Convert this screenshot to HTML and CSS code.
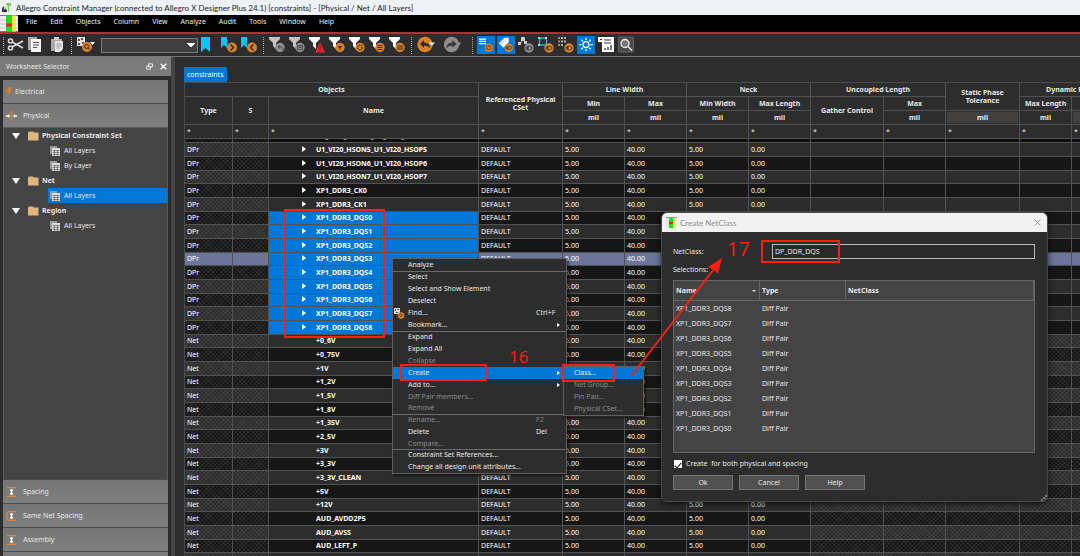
FILE: index.html
```
<!DOCTYPE html>
<html lang="en">
<head>
<meta charset="utf-8">
<title>Allegro Constraint Manager</title>
<link rel="stylesheet" href="styles.css">
</head>
<body>
<svg class="defs" width="0" height="0" aria-hidden="true">
  <symbol id="funnel" viewBox="0 0 20 20"><path d="M2 2h11v2L9 8v6l-3-3V8L2 4z" fill="#fff"/></symbol>
  <symbol id="funnel-dim" viewBox="0 0 20 20"><path d="M2 2h11v2L9 8v6l-3-3V8L2 4z" fill="#c4c4c4"/></symbol>
  <symbol id="sheet" viewBox="0 0 12 12"><path d="M1 1h7v2H3v6H1z" fill="#999"/><rect x="3" y="3" width="8" height="8" fill="#ddd"/><path d="M3.5 5.5h7M3.500 7.500h7M3.500 9.500h7M5.500 5v6M8.500 5v6" stroke="#555" stroke-width=".6"/></symbol>
  <symbol id="folder" viewBox="0 0 11 10"><path d="M0 1.500 1 .5h4l1 1h4.500v8H0z" fill="#dfb67c"/></symbol>
  <symbol id="app" viewBox="0 0 18 16"><rect width="18" height="16" fill="#eee"/><path d="M0 4.500h6M0 8.500h6M0 12.500h6" stroke="#bbb" stroke-width=".7"/><rect x="6" width="6" height="16" fill="#1be01b"/><rect x="12" width="4" height="16" fill="#f6f032"/><rect x="6" y="8" width="6" height="3" fill="#e3241c"/><path d="M12 4.500h6M12 8.500h6M12 12.500h6" stroke="#c9c060" stroke-width=".6"/></symbol>
  <symbol id="toggle" viewBox="0 0 10 10"><circle cx="5" cy="5" r="4.700" fill="currentColor"/><rect x="2" y="3.400" width="6" height="3.400" rx="1.600" fill="none" stroke="#2d2d2d" stroke-width=".8"/><circle cx="3.600" cy="5.100" r="1" fill="#2d2d2d"/></symbol>
</svg>

<header class="titlebar">
  <svg width="11" height="11" viewBox="0 0 11 11"><path d="M1 6l2-2v6H1z" fill="#2b2f9a"/><path d="M3 8l3-4v6H3z" fill="#222"/><path d="M4 5l3-1-2 5z" fill="#f4e22a"/><path d="M7 1h3v3H8v6H7z" fill="#5ed65e"/><path d="M5 3l2-2v2z" fill="#e33"/></svg>
  <span>Allegro Constraint Manager (connected to Allegro X Designer Plus 24.1) [constraints] - [Physical / Net / All Layers]</span>
</header>
<nav class="menubar">
  <svg class="menubar-logo" width="18" height="17"><use href="#app"/></svg>
  <button>File</button><button>Edit</button><button>Objects</button><button>Column</button><button>View</button><button>Analyze</button><button>Audit</button><button>Tools</button><button>Window</button><button>Help</button>
</nav>

<div class="toolbar">
  <i class="grip grip-first"></i>
  <button class="tool" aria-label="Cut"><svg viewBox="0 0 20 20"><g fill="none" stroke="#ddd" stroke-width="1.600"><circle cx="4.500" cy="6" r="2"/><circle cx="4.500" cy="13" r="2"/><path d="M6 7l11 6M6 12l11-6"/></g></svg></button>
  <button class="tool" aria-label="Copy"><svg viewBox="0 0 20 20"><path d="M2 2h9v2H5v11H2z" fill="#aaa"/><path d="M5 4h10v13H5z" fill="#f4f4f4"/><path d="M7 7.500h6M7 10h6M7 12.500h4" stroke="#555"/></svg></button>
  <button class="tool" aria-label="Paste"><svg viewBox="0 0 20 20"><path d="M5 4h11v12H5z" fill="#aaa"/><path d="M8 2h5v3H8z" fill="#ccc"/><path d="M9 6h8v8l-3 3H9z" fill="#e4e4e4"/><path d="M10.500 9h5M10.500 11h5M10.500 13h3" stroke="#888" stroke-width=".8"/></svg></button>
  <i class="grip grip-wide"></i>
  <button class="tool tool-drop" aria-label="Find"><svg viewBox="0 0 25 20"><path d="M1 2h8v9H1z" fill="#e2e2e2"/><path d="M2 4h2v2H2zM5 3h2v2H5zM2 8h2v2H2zM6 7h2v2H6z" fill="#555"/><circle cx="11" cy="12" r="5" fill="#d9822b"/><circle cx="10.500" cy="11.500" r="2" fill="none" stroke="#3a2a18"/><path d="M12 13l2 2" stroke="#3a2a18"/><path d="M14 7h5l-2.500 3z" fill="#fff"/></svg></button>
  <select class="find-box" aria-label="Bookmark"><option></option></select>
  <button class="tool" aria-label="Toggle bookmark"><svg viewBox="0 0 20 20"><path d="M2 2h9v15l-4.500-4L2 17z" fill="#12c2f5"/></svg></button>
  <button class="tool" aria-label="Next bookmark"><svg viewBox="0 0 20 20"><path d="M2 2h6v11L5 10l-3 3z" fill="#12c2f5"/><circle cx="13" cy="12.500" r="5" fill="#d9822b"/><path d="M11.500 9.500l3 3-3 3" fill="none" stroke="#3a2a18" stroke-width="1.500"/></svg></button>
  <button class="tool" aria-label="Previous bookmark"><svg viewBox="0 0 20 20"><path d="M2 2h6v11L5 10l-3 3z" fill="#12c2f5"/><circle cx="13" cy="12.500" r="5" fill="#d9822b"/><path d="M14.500 9.500l-3 3 3 3" fill="none" stroke="#3a2a18" stroke-width="1.500"/></svg></button>
  <i class="grip"></i>
  <button class="tool" aria-label="Undo filter"><svg viewBox="0 0 20 20"><use href="#funnel-dim"/><circle cx="13" cy="12.500" r="4.700" fill="#8e8e8e"/><path d="M16 15c0-3-2-3.500-5-3l1.500-1.500M11 12l1.500 1.500" fill="none" stroke="#444"/></svg></button>
  <button class="tool" aria-label="Save filter"><svg viewBox="0 0 20 20"><use href="#funnel-dim"/><circle cx="13" cy="12.500" r="4.700" fill="#8e8e8e"/><path d="M10.500 10.500h5v4h-5zM12 10.500v2h2v-2" fill="none" stroke="#444" stroke-width=".8"/></svg></button>
  <button class="tool" aria-label="Filter errors"><svg viewBox="0 0 20 20"><use href="#funnel"/><path d="M13 7l5 10.500H8z" fill="#e3242b"/><path d="M13 11v3M13 15v1" stroke="#511"/></svg></button>
  <button class="tool" aria-label="Filter objects"><svg viewBox="0 0 20 20"><use href="#funnel"/><circle cx="13" cy="12.500" r="4.700" fill="#d9822b"/><path d="M10.500 11h5L13.500 13v2.500l-1-1V13z" fill="#3a2a18"/></svg></button>
  <button class="tool" aria-label="Filter options"><svg viewBox="0 0 20 20"><use href="#funnel"/><circle cx="13" cy="12.500" r="4.700" fill="#d9822b"/><circle cx="13" cy="12.500" r="2.300" fill="none" stroke="#3a2a18" stroke-width="1.400" stroke-dasharray="1 .8"/></svg></button>
  <button class="tool" aria-label="Filter rows"><svg viewBox="0 0 20 20"><use href="#funnel"/><circle cx="13" cy="12.500" r="4.700" fill="#d9822b"/><path d="M10.500 10.500h5M10.500 12.500h5M10.500 14.500h5" stroke="#3a2a18"/></svg></button>
  <button class="tool" aria-label="Filter columns"><svg viewBox="0 0 20 20"><use href="#funnel"/><circle cx="13" cy="12.500" r="4.700" fill="#d9822b"/><path d="M11 10v5M13 10v5M15 10v5" stroke="#3a2a18"/></svg></button>
  <i class="grip"></i>
  <button class="tool tool-undo" aria-label="Undo"><svg viewBox="0 0 27 20"><circle cx="10" cy="9.500" r="7.700" fill="#e07f27"/><path d="M5 9l4-4v2.500c4 0 6 2 6 6-1.500-2-3-2.700-6-2.700V13z" fill="#2d2d2d"/><path d="M14 7.500h6l-3 3z" fill="#fff"/></svg></button>
  <button class="tool tool-redo" aria-label="Redo"><svg viewBox="0 0 26 20"><circle cx="9.500" cy="9.500" r="7.700" fill="#8e8e8e"/><path d="M14.500 9l-4-4v2.500c-4 0-6 2-6 6 1.500-2 3-2.700 6-2.700V13z" fill="#3a3a3a"/><path d="M14.500 7.500h5l-3 3.500z" fill="#8e8e8e"/></svg></button>
  <i class="grip"></i>
  <button class="tool on" aria-label="Row options"><svg viewBox="0 0 20 20"><path d="M2 3.500h8M2 6h8M2 8.500h8" stroke="#fff" stroke-width="1.200"/><circle cx="13" cy="13" r="4.700" fill="#d9822b"/><circle cx="13" cy="13" r="2.300" fill="none" stroke="#3a2a18" stroke-width="1.400" stroke-dasharray="1 .8"/></svg></button>
  <button class="tool on" aria-label="Tags"><svg viewBox="0 0 20 20"><path d="M2 8l6-6h5v5l-6 6z" fill="#fff"/><path d="M5 9l5-5M4 7l4-4" stroke="#6aa9e0" stroke-width=".8"/><svg x="8" y="8" width="10" height="10" color="#d9822b"><use href="#toggle"/></svg></svg></button>
  <button class="tool" aria-label="Hierarchy"><svg viewBox="0 0 20 20"><path d="M4 9l3-5 3 4" fill="none" stroke="#ccc"/><path d="M5 2h4v4H5zM2 7h3v3H2zM8 6h3v3H8z" fill="#ccc"/><svg x="8" y="8" width="10" height="10" color="#8e8e8e"><use href="#toggle"/></svg></svg></button>
  <button class="tool" aria-label="Outline"><svg viewBox="0 0 20 20"><rect x="3.500" y="3" width="7" height="7" rx="2" fill="none" stroke="#29b7dc" stroke-width="1.300"/><path d="M2 2h2v2H2zM9 2h2v2H9zM2 9h2v2H2z" fill="#9be4f5"/><svg x="8" y="8" width="10" height="10" color="#d9822b"><use href="#toggle"/></svg></svg></button>
  <button class="tool" aria-label="Grid"><svg viewBox="0 0 20 20"><path d="M3 2v9" stroke="#f0a060" stroke-width="1.500" stroke-dasharray="2 1.500"/><path d="M6 2v9M9 2v6" stroke="#ddd" stroke-width="1.500" stroke-dasharray="2 1.500"/><svg x="8" y="8" width="10" height="10" color="#d9822b"><use href="#toggle"/></svg></svg></button>
  <button class="tool on" aria-label="Highlight"><svg viewBox="0 0 20 20"><g fill="none" stroke="#fff" stroke-width="1.400"><circle cx="10" cy="9.500" r="3.300"/><path d="M10 2v2.500M10 14.500V17M2.500 9.500H5M15 9.500h2.500M4.700 4.200l1.800 1.800M13.500 13l1.800 1.800M4.700 14.800L6.500 13M13.500 6l1.800-1.800"/></g></svg></button>
  <button class="tool" aria-label="Report"><svg viewBox="0 0 20 20"><path d="M2 2h16v15H6V7H2z" fill="#fff"/><path d="M4 4.500h2M8 5h7M8 8h7" stroke="#333"/><path d="M9 15v-2M12 15v-3M15 15v-5" stroke="#333" stroke-width="1.300"/></svg></button>
  <button class="tool" aria-label="Search"><svg viewBox="0 0 20 20"><rect x="2.500" y="2" width="15" height="15" rx="1" fill="#4a4a4a" stroke="#777" stroke-width=".7"/><circle cx="9" cy="8.500" r="4" fill="#777" stroke="#eee" stroke-width="1.300"/><path d="M12 11.500l4 4" stroke="#eee" stroke-width="1.500"/></svg></button>
</div>

<div class="workspace">
  <aside class="selector">
    <div class="selector-title"><span>Worksheet Selector</span>
      <button aria-label="Float"><svg width="7" height="7" viewBox="0 0 7 7"><path d="M2.500.8h4v3h-4zM.5 3.200h4v3h-4z" fill="#7b7b7b" stroke="#fff" stroke-width=".8"/></svg></button>
      <button aria-label="Close"><svg width="7" height="7" viewBox="0 0 7 7"><path d="M.7.7l5.600 5.600M6.300.7L.7 6.300" stroke="#fff" stroke-width="1.300"/></svg></button>
    </div>
    <div class="accordion">
      <button class="section section-elec"><svg width="6" height="12" viewBox="0 0 6 12"><path d="M3 1h3L4 4h2L1 10l1-4H0z" fill="#e07f27"/></svg>Electrical</button>
      <button class="section"><svg width="11" height="10" viewBox="0 0 11 10"><path d="M0 5h3M8 5h3" stroke="#fff" stroke-width="1.300"/><path d="M2 3l2 2-2 2zM9 3L7 5l2 2z" fill="#fff"/><path d="M7 0C4 1 6 4 5 9" fill="none" stroke="#e07f27" stroke-width="1.600"/></svg>Physical</button>
      <ul class="tree">
        <li class="branch"><i class="caret"></i><svg width="11" height="10"><use href="#folder"/></svg>Physical Constraint Set</li>
        <li class="leaf"><span><svg width="12" height="12"><use href="#sheet"/></svg>All Layers</span></li>
        <li class="leaf"><span><svg width="12" height="12"><use href="#sheet"/></svg>By Layer</span></li>
        <li class="branch"><i class="caret"></i><svg width="11" height="10"><use href="#folder"/></svg>Net</li>
        <li class="leaf current"><span><svg width="12" height="12"><use href="#sheet"/></svg>All Layers</span></li>
        <li class="branch"><i class="caret"></i><svg width="11" height="10"><use href="#folder"/></svg>Region</li>
        <li class="leaf"><span><svg width="12" height="12"><use href="#sheet"/></svg>All Layers</span></li>
      </ul>
      <button class="section"><svg width="11" height="10" viewBox="0 0 11 10"><path d="M1 .7h9M1 9.300h9" stroke="#d98a45" stroke-width="1.200"/><path d="M5.500 2v6" stroke="#fff" stroke-width="1.400"/><path d="M3.500 4l2-2.300 2 2.300zM3.500 6l2 2.300 2-2.300z" fill="#fff"/></svg>Spacing</button>
      <button class="section"><svg width="11" height="10" viewBox="0 0 11 10"><path d="M10 .7H3C0 .7 0 9.300 3 9.300h7" fill="none" stroke="#d98a45" stroke-width="1.200"/><path d="M5.500 2v6" stroke="#fff" stroke-width="1.400"/><path d="M3.500 4l2-2.300 2 2.300zM3.500 6l2 2.300 2-2.300z" fill="#fff"/></svg>Same Net Spacing</button>
      <button class="section"><svg width="11" height="10" viewBox="0 0 11 10"><path d="M1 .7h9M1 9.300h9" stroke="#d98a45" stroke-width="1.200"/><path d="M5.500 2v6" stroke="#fff" stroke-width="1.400"/><path d="M3.500 4l2-2.300 2 2.300zM3.500 6l2 2.300 2-2.300z" fill="#fff"/></svg>Assembly</button>
      <div class="section-cut"></div>
    </div>
  </aside>

  <main class="sheet">
    <button class="tab">constraints</button>
    <table class="grid">
      <colgroup><col class="w48"><col class="w36"><col class="w210"><col class="w84"><col class="w62"><col class="w62"><col class="w62"><col class="w62"><col class="w73"><col class="w62"><col class="w74"><col class="w52"><col class="w54"></colgroup>
      <thead>
        <tr><th colspan="3">Objects</th><th rowspan="3">Referenced Physical<br>CSet</th><th colspan="2">Line Width</th><th colspan="2">Neck</th><th colspan="2">Uncoupled Length</th><th rowspan="2">Static Phase<br>Tolerance</th><th colspan="2">Dynamic Phase</th></tr>
        <tr><th rowspan="2">Type</th><th rowspan="2">S</th><th rowspan="2">Name</th><th>Min</th><th>Max</th><th>Min Width</th><th>Max Length</th><th rowspan="2">Gather Control</th><th>Max</th><th>Max Length</th><th></th></tr>
        <tr><th>mil</th><th>mil</th><th>mil</th><th>mil</th><th>mil</th><th class="unit">mil</th><th>mil</th><th class="unit"></th></tr>
        <tr class="filter"><td>*</td><td>*</td><td>*</td><td>*</td><td>*</td><td>*</td><td>*</td><td>*</td><td>*</td><td>*</td><td>*</td><td>*</td><td>*</td></tr>
      </thead>
      <tbody>
        <tr class="cut"><td></td><td></td><td class="name"><div>U1_VI20_HSON4_U1_VI20_HSOP4</div></td><td></td><td></td><td></td><td></td><td></td><td></td><td></td><td></td><td></td><td></td></tr>
      </tbody>
      <tbody class="rows">
        <tr class="pair"><td>DPr<td><td class="name">U1_VI20_HSON5_U1_VI20_HSOP5<td>DEFAULT<td>5.00<td>40.00<td>5.00<td>0.00<td><td><td><td><td>
        <tr class="pair"><td>DPr<td><td class="name">U1_VI20_HSON6_U1_VI20_HSOP6<td>DEFAULT<td>5.00<td>40.00<td>5.00<td>0.00<td><td><td><td><td>
        <tr class="pair"><td>DPr<td><td class="name">U1_VI20_HSON7_U1_VI20_HSOP7<td>DEFAULT<td>5.00<td>40.00<td>5.00<td>0.00<td><td><td><td><td>
        <tr class="pair"><td>DPr<td><td class="name">XP1_DDR3_CK0<td>DEFAULT<td>5.00<td>40.00<td>5.00<td>0.00<td><td><td><td><td>
        <tr class="pair"><td>DPr<td><td class="name">XP1_DDR3_CK1<td>DEFAULT<td>5.00<td>40.00<td>5.00<td>0.00<td><td><td><td><td>
        <tr class="pair picked"><td>DPr<td><td class="name">XP1_DDR3_DQS0<td>DEFAULT<td>5.00<td>40.00<td>5.00<td>0.00<td><td><td><td><td>
        <tr class="pair picked"><td>DPr<td><td class="name">XP1_DDR3_DQS1<td>DEFAULT<td>5.00<td>40.00<td>5.00<td>0.00<td><td><td><td><td>
        <tr class="pair picked"><td>DPr<td><td class="name">XP1_DDR3_DQS2<td>DEFAULT<td>5.00<td>40.00<td>5.00<td>0.00<td><td><td><td><td>
        <tr class="pair picked focus"><td>DPr<td><td class="name">XP1_DDR3_DQS3<td>DEFAULT<td>5.00<td>40.00<td>5.00<td>0.00<td><td><td><td><td>
        <tr class="pair picked"><td>DPr<td><td class="name">XP1_DDR3_DQS4<td>DEFAULT<td>5.00<td>40.00<td>5.00<td>0.00<td><td><td><td><td>
        <tr class="pair picked"><td>DPr<td><td class="name">XP1_DDR3_DQS5<td>DEFAULT<td>5.00<td>40.00<td>5.00<td>0.00<td><td><td><td><td>
        <tr class="pair picked"><td>DPr<td><td class="name">XP1_DDR3_DQS6<td>DEFAULT<td>5.00<td>40.00<td>5.00<td>0.00<td><td><td><td><td>
        <tr class="pair picked"><td>DPr<td><td class="name">XP1_DDR3_DQS7<td>DEFAULT<td>5.00<td>40.00<td>5.00<td>0.00<td><td><td><td><td>
        <tr class="pair picked"><td>DPr<td><td class="name">XP1_DDR3_DQS8<td>DEFAULT<td>5.00<td>40.00<td>5.00<td>0.00<td><td><td><td><td>
        <tr class="net"><td>Net<td><td class="name">+0_6V<td>DEFAULT<td>5.00<td>40.00<td>5.00<td>0.00<td><td><td><td><td>
        <tr class="net"><td>Net<td><td class="name">+0_75V<td>DEFAULT<td>5.00<td>40.00<td>5.00<td>0.00<td><td><td><td><td>
        <tr class="net"><td>Net<td><td class="name">+1V<td>DEFAULT<td>5.00<td>40.00<td>5.00<td>0.00<td><td><td><td><td>
        <tr class="net"><td>Net<td><td class="name">+1_2V<td>DEFAULT<td>5.00<td>40.00<td>5.00<td>0.00<td><td><td><td><td>
        <tr class="net"><td>Net<td><td class="name">+1_5V<td>DEFAULT<td>5.00<td>40.00<td>5.00<td>0.00<td><td><td><td><td>
        <tr class="net"><td>Net<td><td class="name">+1_8V<td>DEFAULT<td>5.00<td>40.00<td>5.00<td>0.00<td><td><td><td><td>
        <tr class="net"><td>Net<td><td class="name">+1_35V<td>DEFAULT<td>5.00<td>40.00<td>5.00<td>0.00<td><td><td><td><td>
        <tr class="net"><td>Net<td><td class="name">+2_5V<td>DEFAULT<td>5.00<td>40.00<td>5.00<td>0.00<td><td><td><td><td>
        <tr class="net"><td>Net<td><td class="name">+3V<td>DEFAULT<td>5.00<td>40.00<td>5.00<td>0.00<td><td><td><td><td>
        <tr class="net"><td>Net<td><td class="name">+3_3V<td>DEFAULT<td>5.00<td>40.00<td>5.00<td>0.00<td><td><td><td><td>
        <tr class="net"><td>Net<td><td class="name">+3_3V_CLEAN<td>DEFAULT<td>5.00<td>40.00<td>5.00<td>0.00<td><td><td><td><td>
        <tr class="net"><td>Net<td><td class="name">+5V<td>DEFAULT<td>5.00<td>40.00<td>5.00<td>0.00<td><td><td><td><td>
        <tr class="net"><td>Net<td><td class="name">+12V<td>DEFAULT<td>5.00<td>40.00<td>5.00<td>0.00<td><td><td><td><td>
        <tr class="net"><td>Net<td><td class="name">AUD_AVDD2P5<td>DEFAULT<td>5.00<td>40.00<td>5.00<td>0.00<td><td><td><td><td>
        <tr class="net"><td>Net<td><td class="name">AUD_AVSS<td>DEFAULT<td>5.00<td>40.00<td>5.00<td>0.00<td><td><td><td><td>
        <tr class="net"><td>Net<td><td class="name">AUD_LEFT_P<td>DEFAULT<td>5.00<td>40.00<td>5.00<td>0.00<td><td><td><td><td>
        <tr class="net"><td><td><td class="name"><td><td><td><td><td><td><td><td><td>
      </tbody>
    </table>
  </main>
</div>

<div class="menu context-menu">
  <ul><li><button>Analyze</button></li></ul>
  <ul><li><button>Select</button></li><li><button>Select and Show Element</button></li><li><button>Deselect</button></li><li class="with-icon"><svg width="11" height="11" viewBox="0 0 11 11"><path d="M0 0h6v6H0z" fill="#ddd"/><path d="M1 1h1v2H1zM3 1h2v1H3zM2 4h2v1H2z" fill="#555"/><circle cx="7" cy="7.500" r="3.300" fill="#d9822b"/><circle cx="7" cy="7.300" r="1.300" fill="none" stroke="#5a3818" stroke-width=".8"/></svg><button>Find...</button><kbd>Ctrl+F</kbd></li><li class="sub"><button>Bookmark...</button></li></ul>
  <ul class="group-edit"><li><button>Expand</button></li><li><button>Expand All</button></li><li><button disabled>Collapse</button></li><li class="sub active"><button>Create</button></li><li class="sub"><button>Add to...</button></li><li><button disabled>Diff Pair members...</button></li><li><button disabled>Remove</button></li></ul>
  <ul class="group-name"><li class="off"><button disabled>Rename...</button><kbd>F2</kbd></li><li><button>Delete</button><kbd>Del</kbd></li><li><button disabled>Compare...</button></li></ul>
  <ul><li><button>Constraint Set References...</button></li><li><button>Change all design unit attributes...</button></li></ul>
</div>
<div class="menu sub-menu">
  <ul><li class="active"><button>Class...</button></li><li><button disabled>Net Group...</button></li><li><button disabled>Pin Pair...</button></li><li><button disabled>Physical CSet...</button></li></ul>
</div>

<section class="dialog" role="dialog" aria-label="Create NetClass">
  <div class="dialog-title"><svg width="11" height="11" viewBox="0 0 11 11"><rect width="11" height="11" fill="#e6e6e6"/><path d="M0 0h11v1H0z" fill="#999"/><rect x="3" y="1" width="4" height="10" fill="#1be01b"/><rect x="7" y="1" width="2" height="10" fill="#f0e62c"/><rect x="3" y="5" width="4" height="2" fill="#e3241c"/></svg><span>Create NetClass</span><button aria-label="Close"><svg width="7" height="7" viewBox="0 0 7 7"><path d="M.5.5l6 6M6.500.5l-6 6" stroke="#999"/></svg></button></div>
  <div class="dialog-body">
    <div class="field"><label for="nc">NetClass:</label><input id="nc" type="text" value="DP_DDR_DQS"></div>
    <div class="caption">Selections:</div>
    <div class="list">
      <table>
        <thead><tr><th class="sorted">Name</th><th>Type</th><th>NetClass</th></tr></thead>
        <tbody>
          <tr><td>XP1_DDR3_DQS8</td><td>Diff Pair</td><td></td></tr>
          <tr><td>XP1_DDR3_DQS7</td><td>Diff Pair</td><td></td></tr>
          <tr><td>XP1_DDR3_DQS6</td><td>Diff Pair</td><td></td></tr>
          <tr><td>XP1_DDR3_DQS5</td><td>Diff Pair</td><td></td></tr>
          <tr><td>XP1_DDR3_DQS4</td><td>Diff Pair</td><td></td></tr>
          <tr><td>XP1_DDR3_DQS3</td><td>Diff Pair</td><td></td></tr>
          <tr><td>XP1_DDR3_DQS2</td><td>Diff Pair</td><td></td></tr>
          <tr><td>XP1_DDR3_DQS1</td><td>Diff Pair</td><td></td></tr>
          <tr><td>XP1_DDR3_DQS0</td><td>Diff Pair</td><td></td></tr>
        </tbody>
      </table>
    </div>
    <label class="check"><input type="checkbox" checked>Create&nbsp; for both physical and spacing</label>
    <div class="actions"><button>Ok</button><button>Cancel</button><button>Help</button></div>
  </div>
  <svg class="resize" width="6" height="6" viewBox="0 0 6 6"><path d="M4 0h2v2H4zM2 2h2v2H2zM4 3h2v3H4zM0 4h2v2H0z" fill="#777"/></svg>
</section>

<svg class="notes" width="1080" height="556" viewBox="0 0 1080 556">
  <g fill="none" stroke="#fb2012" stroke-width="2">
    <rect x="285" y="210" width="99" height="127"/>
    <rect x="401" y="365" width="85" height="15"/>
    <rect x="563" y="365" width="51" height="16"/>
    <rect x="762" y="241" width="77" height="21"/>
    <path d="M632 375l82-106"/>
  </g>
  <path d="M722 258l-4 16-4-4-6-3z" fill="#fb2012"/>
  <text class="step-16" x="509" y="363">16</text>
  <text class="step-17" x="727" y="256">17</text>
</svg>
</body>
</html>
```

FILE: styles.css
```
* { box-sizing: border-box; }
html, body { height: 100%; }
body {
  margin: 0;
  display: flex;
  flex-direction: column;
  overflow: hidden;
  position: relative;
  background: #2d2d2d;
  color: #e8e8e8;
  font: 7px/12px "Noto Sans", "Open Sans", sans-serif;
}
button, input, select, kbd { font: inherit; color: inherit; }
button { background: none; border: 0; padding: 0; text-align: left; white-space: nowrap; }
ul { list-style: none; margin: 0; padding: 0; }
svg { flex: none; display: block; }
.defs { position: absolute; }

/* Window chrome */
.titlebar {
  display: flex; align-items: center; gap: 4px;
  height: 15px; flex: none; padding-left: 1px;
  background: #eef2f7; color: #222;
  font-family: Lato, "Open Sans", sans-serif; font-size: 8px; white-space: nowrap;
}
.menubar {
  display: flex; gap: 13px; height: 17px; flex: none;
  background: #000; color: #eee;
}
.menubar button { line-height: 13px; height: 13px; }
.menubar-logo { margin-right: -5px; }
.toolbar {
  display: flex; align-items: center; flex: none; height: 25px;
  background: #2d2d2d; border-top: 2px solid #a33636; border-bottom: 1px solid #777;
}
.tool { width: 20px; height: 20px; flex: none; }
.tool > svg { width: 100%; height: 100%; }
.tool.on { background: #0078d7 content-box; padding: 1px; }
.tool-drop { width: 25px; }
.tool-undo { width: 27px; }
.tool-redo { width: 26px; }
.grip { width: 8px; height: 17px; flex: none; background: repeating-linear-gradient(#aaa 0 1px, transparent 1px 2px) center / 1px 100% no-repeat; }
.grip-first { width: 6px; }
.grip-wide { width: 10px; }
.find-box {
  appearance: none; width: 97px; height: 15px; flex: none; margin-right: 1px;
  border: 1px solid #7a7a7a; border-radius: 0;
  background: #3f3f3f;
  background-image: linear-gradient(to bottom left, #fff 50%, transparent 50%), linear-gradient(to bottom right, #fff 50%, transparent 50%);
  background-size: 4px 5px; background-repeat: no-repeat;
  background-position: right 6px center, right 2px center;
}

.workspace { display: flex; flex: 1; min-height: 0; }

/* Worksheet selector */
.selector { display: flex; flex-direction: column; width: 171px; flex: none; }
.selector-title {
  display: flex; align-items: center; gap: 7px; height: 19px; flex: none;
  padding: 0 4px 0 6px; background: #7b7b7b;
}
.selector-title span { flex: 1; }
.accordion {
  display: flex; flex-direction: column; flex: 1; min-height: 0;
  margin: 4px 3px 0; gap: 1px; background: #4c4c4c;
}
.section {
  display: flex; align-items: center; gap: 6px; height: 23px; flex: none; width: 100%;
  padding-left: 3px; background: linear-gradient(#757575, #808080);
}
.section-elec { gap: 3px; }
.section-cut { height: 4px; flex: none; background: #7b7b7b; }
.tree { flex: 1; min-height: 0; margin-top: -1px; background: #444; border: 1px solid #5c5c5c; border-width: 1px 1px 0; }
.tree li { display: flex; align-items: center; height: 15px; }
.branch { font-weight: bold; padding-left: 8px; }
.branch svg { margin: 0 3px 0 8px; }
.caret { border: 4px solid transparent; border-top: 6px solid #fff; border-bottom: 0; }
.leaf { padding-left: 44px; }
.leaf span { display: flex; align-items: center; gap: 3px; flex: 1; height: 100%; padding-left: 1px; }
.current span { background: #0078d7; }

/* Constraint grid */
.sheet { flex: 1; min-width: 0; overflow: hidden; border-left: 4px solid #454545; padding: 10px 0 0 9px; display: flex; flex-direction: column; align-items: flex-start; }
.tab { background: #0078d7; height: 15px; padding: 0 3px; flex: none; color: #fff; }
.grid {
  table-layout: fixed; width: 941px; flex: none;
  border-collapse: separate; border-spacing: 0;
  border-top: 1px solid #4a4a4a; border-left: 1px solid #4a4a4a;
}
.w36 { width: 36px; } .w48 { width: 48px; } .w52 { width: 52px; } .w54 { width: 54px; } .w62 { width: 62px; }
.w73 { width: 73px; } .w74 { width: 74px; } .w84 { width: 84px; } .w210 { width: 210px; }
.grid th, .grid td {
  padding: 0 2px; height: 14px; line-height: 13px; white-space: nowrap; overflow: hidden;
  border-right: 1px solid #525252; border-bottom: 1px solid #525252;
}
.grid th { text-align: center; line-height: 8px; }
.grid .unit { background: #43413f; box-shadow: inset 0 0 0 1px #2d2d2d; }
.grid .cut td { height: 4px; line-height: 3px; background: #0d0d0d; }
.cut div { height: 3px; display: flex; align-items: flex-end; line-height: 11px; overflow: hidden; }
.rows tr:nth-child(3n) td { height: 13px; line-height: 12px; }
.rows tr:nth-child(even) { background: #161616; }
.rows td { color: #fff; }
.rows td:nth-child(-n+2), .net td:nth-child(n+9), .cut td:nth-child(-n+2) {
  background-image:
    repeating-linear-gradient(45deg, #9090901c 0 1px, transparent 1px 3px),
    repeating-linear-gradient(-45deg, #9090901c 0 1px, transparent 1px 3px);
}
.grid .name { padding-left: 47px; font-weight: bold; }
.pair .name::before {
  content: ""; display: inline-block; margin: 0 10px 0 -14px;
  border: 3px solid transparent; border-left: 4px solid #fff; border-right: 0;
}
.grid .picked .name { background: #0078d7; }
.rows .focus td { background: #6b7599; }

/* Menus */
.menu {
  position: absolute; background: #2d2d2d; border: 1px solid #606060;
  box-shadow: 2px 2px 2px #0008;
}
.context-menu { left: 392px; top: 258px; width: 175px; }
.sub-menu { left: 563px; top: 366px; width: 81px; }
.menu ul + ul { box-shadow: inset 0 1px #6a6a6a; }
.menu li { display: flex; align-items: center; height: 12px; padding-left: 15px; }
.menu .group-edit li:nth-child(6), .menu .group-name li:last-child { height: 11px; }
.menu button { flex: 1; }
.menu button:disabled, .menu .off kbd { color: #8c8c8c; }
.menu kbd { width: 30px; }
.menu .active { background: #0078d7; }
.menu .with-icon { padding-left: 1px; gap: 3px; }
.sub-menu .active, .sub-menu li { padding-left: 10px; }
.sub::after { content: ""; margin-right: 6px; border: 2px solid transparent; border-left: 3px solid #fff; border-right: 0; }

/* Create NetClass dialog */
.dialog {
  position: absolute; left: 661px; top: 212px; width: 387px;
  background: #2d2d2d; border: 1px solid #484848; border-radius: 6px; overflow: hidden;
  box-shadow: 0 2px 6px #000a;
}
.dialog-title { display: flex; align-items: center; gap: 3px; height: 19px; padding: 0 6px 0 4px; background: #f2f2f2; color: #8e8e8e; font-family: Lato, "Open Sans", sans-serif; font-size: 8px; }
.dialog-title span { flex: 1; }
.dialog-body { padding: 12px 12px 11px 11px; }
.field { display: flex; align-items: center; }
.field label { width: 99px; }
.field input { flex: 1; min-width: 0; height: 15px; padding: 0 2px; border: 1px solid #bbb; background: #2a2a2a; outline: 0; }
.caption { margin: 5px 0 4px; }
.list { height: 173px; background: #444; border: 1px solid #666; }
.list table { width: 100%; table-layout: fixed; border-collapse: separate; border-spacing: 0; }
.list th { text-align: left; height: 20px; padding: 0 2px; border-right: 1px solid #666; border-bottom: 1px solid #666; }
.list th:nth-child(-n+2) { width: 86px; }
.list td { height: 15px; padding: 0 2px; }
.sorted::after { content: ""; float: right; margin: 5px 1px 0; border: 2px solid transparent; border-top-color: #ddd; border-bottom: 0; }
.check { display: flex; align-items: center; gap: 4px; height: 12px; margin: 5px 0; }
.check input { appearance: none; width: 8px; height: 8px; margin: 0 0 0 1px; background: #fff; display: grid; place-items: center; }
.check input:checked::after { content: ""; width: 3px; height: 6px; border: solid #111; border-width: 0 1px 1px 0; transform: rotate(40deg); }
.actions { display: flex; gap: 6px; }
.actions button { width: 60px; height: 15px; text-align: center; background: #505050; border: 1px solid #747474; }
.resize { position: absolute; right: 0; bottom: 0; }

/* Step markers */
.notes { position: absolute; left: 0; top: 0; pointer-events: none; }
.notes text { font-family: "Open Sans", sans-serif; fill: #fb2012; }
.step-16 { font-size: 17px; }
.step-17 { font-size: 20px; }
```
